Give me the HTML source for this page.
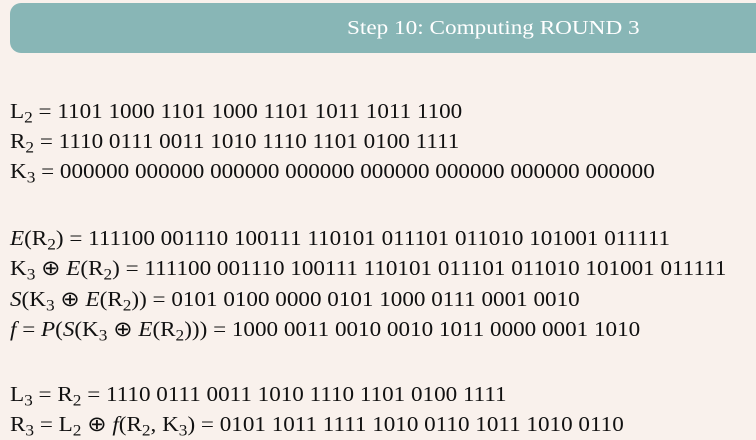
<!DOCTYPE html>
<html><head><meta charset="utf-8"><style>
html,body{margin:0;padding:0;width:756px;height:439px;overflow:hidden;background:#f9f1ec;font-family:"Liberation Serif",serif;color:#111;}
.hdr{position:absolute;left:10px;top:3px;width:760px;height:50px;background:#88b6b6;border-radius:11px;}
.t{position:absolute;left:337px;top:0;line-height:50px;color:#fff;font-size:20px;white-space:nowrap;transform:scaleX(1.16);transform-origin:0 0;}
.l{position:absolute;left:10px;font-size:21px;white-space:nowrap;line-height:22px;transform:scaleX(1.1);transform-origin:0 0;}
sub{font-size:0.75em;vertical-align:-0.3em;line-height:0;}
i{font-style:italic;}
</style></head><body>
<div class="hdr"><div class="t">Step 10: Computing ROUND 3</div></div>
<div class="l" style="top:100px">L<sub>2</sub> = 1101 1000 1101 1000 1101 1011 1011 1100</div>
<div class="l" style="top:130px">R<sub>2</sub> = 1110 0111 0011 1010 1110 1101 0100 1111</div>
<div class="l" style="top:160px">K<sub>3</sub> = 000000 000000 000000 000000 000000 000000 000000 000000</div>
<div class="l" style="top:227px"><i>E</i>(R<sub>2</sub>) = 111100 001110 100111 110101 011101 011010 101001 011111</div>
<div class="l" style="top:257px">K<sub>3</sub> ⊕ <i>E</i>(R<sub>2</sub>) = 111100 001110 100111 110101 011101 011010 101001 011111</div>
<div class="l" style="top:288px"><i>S</i>(K<sub>3</sub> ⊕ <i>E</i>(R<sub>2</sub>)) = 0101 0100 0000 0101 1000 0111 0001 0010</div>
<div class="l" style="top:318px"><i>f</i> = <i>P</i>(<i>S</i>(K<sub>3</sub> ⊕ <i>E</i>(R<sub>2</sub>))) = 1000 0011 0010 0010 1011 0000 0001 1010</div>
<div class="l" style="top:383px">L<sub>3</sub> = R<sub>2</sub> = 1110 0111 0011 1010 1110 1101 0100 1111</div>
<div class="l" style="top:413px">R<sub>3</sub> = L<sub>2</sub> ⊕ <i>f</i>(R<sub>2</sub>, K<sub>3</sub>) = 0101 1011 1111 1010 0110 1011 1010 0110</div>
</body></html>
